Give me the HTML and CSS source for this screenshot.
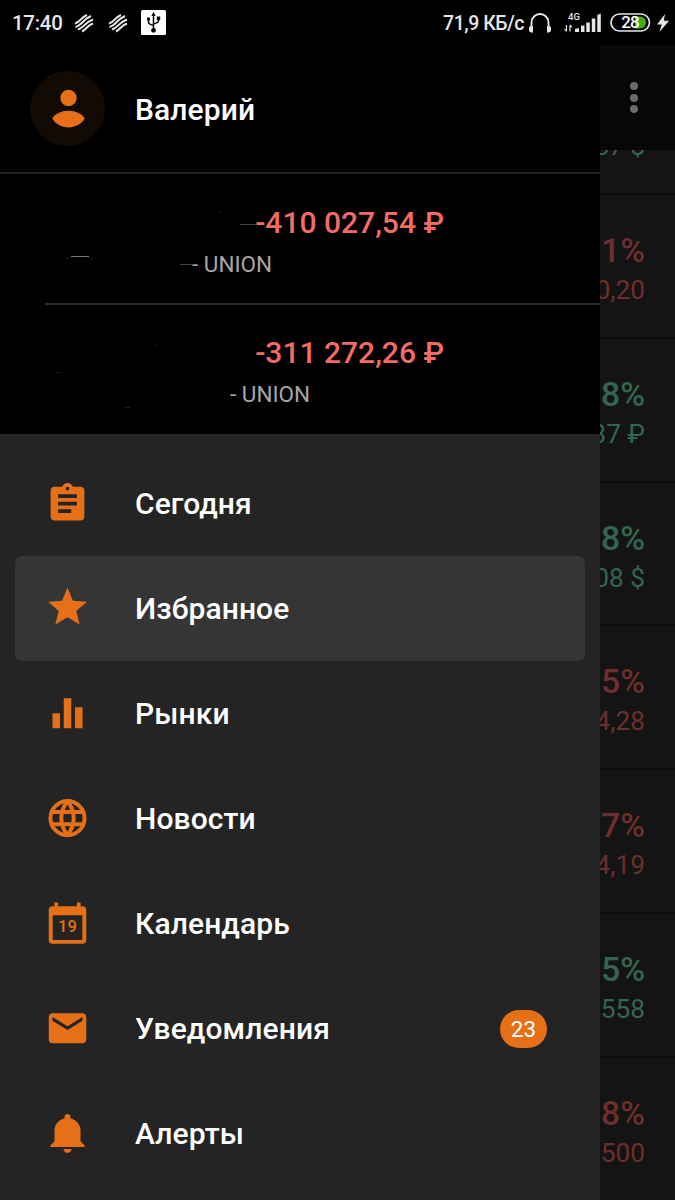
FILE: index.html
```html
<!DOCTYPE html>
<html lang="ru">
<head>
<meta charset="UTF-8" />
<title>Избранное</title>
<link rel="stylesheet" href="styles.css">
</head>
<body>

<div class="statusbar">
    <span class="time">17:40</span>
    <svg class="stripes" viewBox="0 0 20 20"><path d="M1 10.500C7 9 6 4.500 13 2M1.500 14C8 12.500 8 7 17 3M4 16.500C11 14 10 10 19 6.500M8 18.500C13 16 13 12.500 19 10.500"/></svg>
    <svg class="stripes" viewBox="0 0 20 20"><path d="M1 10.500C7 9 6 4.500 13 2M1.500 14C8 12.500 8 7 17 3M4 16.500C11 14 10 10 19 6.500M8 18.500C13 16 13 12.500 19 10.500"/></svg>
    <svg class="usb" viewBox="0 0 25 25">
        <rect width="25" height="25" rx="1.500" fill="#fff"/>
        <path d="M12.500 5v15M7.500 9v3.500q0 1.500 5 3M17.500 8v3q0 1.500-5 3" fill="none" stroke="#000" stroke-width="1.500"/>
        <path d="M12.500 2l2.200 4h-4.400z"/><circle cx="12.500" cy="20.300" r="2.400"/><circle cx="7.500" cy="9" r="1.700"/><path d="M15.800 6.500h3.400v3.400h-3.400z"/>
    </svg>
    <span class="speed">71,9 КБ/с</span>
    <svg class="headphones" viewBox="0 0 22 20"><path d="M2.500 17V9.500a8.500 8.500 0 0 1 17 0V17" fill="none" stroke="#e6e6e6" stroke-width="1.800"/><path d="M0 15q0-2 2-2h2v6.500H2q-2-.5-2-2.500zM22 15q0-2-2-2h-2v6.500h2q2-.5 2-2.500z"/></svg>
    <svg class="signal" viewBox="0 0 37 21">
        <text x="4" y="8">4G</text>
        <path d="M2.500 13v6M.5 17l2 2.500M6 19.500v-6M8 15.500l-2-2.500" fill="none" stroke="#e6e6e6" stroke-width="1.200"/>
        <path d="M11 20v-3l4-1v4zM17 20v-6.500h3.500V20zM22.300 20V10.500h3.500V20zM27.800 20V6.500h3.500V20zM33.300 20V3l3.500-1.500V20z"/>
    </svg>
    <svg class="battery" viewBox="0 0 41 19">
        <path d="M25 3.500h5a6 6 0 0 1 0 12h-5z" fill="#45ab12"/>
        <rect x="1" y="1" width="38.500" height="17" rx="8.500" fill="none" stroke="#e6e6e6" stroke-width="1.700"/>
        <text x="20" y="15.300" text-anchor="middle">28</text>
    </svg>
    <svg class="bolt" viewBox="0 0 12 20"><path d="M8 1L0 11.500h4.700L2.500 19 12 7.800H6.800z"/></svg>
</div>

<div class="screen">
    <div class="drawer">
        <div class="profile">
            <svg class="avatar" viewBox="0 0 75 75">
                <circle cx="37.500" cy="37.500" r="37.500" fill="#120a04"/>
                <circle cx="38.500" cy="27" r="8.200"/>
                <path d="M22.300 47.500C25 43 31 39.800 38.500 39.800S52 43 54.700 47.500C51.500 53 45.500 56.500 38.500 56.500S25.500 53 22.300 47.500z"/>
            </svg>
            <span>Валерий</span>
        </div>
        <div class="account">
            <div class="balance">-410 027,54 ₽</div>
            <div class="union first">- UNION</div>
            <svg class="marks" viewBox="0 0 300 130"><path d="M240 50.500h17M180 90.500h13"/><path class="faint" d="M71 82.500h18"/><path class="faint dim" d="M66 86l4-3M90 83l3 3M218 39h2M221 38v-1M181 63h1.500"/></svg>
        </div>
        <div class="account">
            <div class="balance">-311 272,26 ₽</div>
            <div class="union">- UNION</div>
            <svg class="marks" viewBox="0 0 300 130"><path class="faint dim" d="M55 68.500h5M125 103.500h5M155 41h2"/></svg>
        </div>
        <div class="menu">
            <div class="item">
                <svg viewBox="0 0 24 24"><path d="M19 3h-4.180C14.400 1.840 13.300 1 12 1c-1.300 0-2.400.84-2.820 2H5c-1.100 0-2 .9-2 2v14c0 1.100.9 2 2 2h14c1.100 0 2-.9 2-2V5c0-1.100-.9-2-2-2zm-7 0c.55 0 1 .45 1 1s-.45 1-1 1-1-.45-1-1 .45-1 1-1zm2 14H7v-2h7v2zm3-4H7v-2h10v2zm0-4H7V7h10v2z"/></svg>
                <span>Сегодня</span>
            </div>
            <div class="item active">
                <svg viewBox="0 0 24 24"><path d="M12 .8l2.900 7 7.500.6-5.700 4.900 1.800 7.200L12 16.600l-6.500 3.900 1.800-7.200-5.700-4.900 7.500-.6z"/></svg>
                <span>Избранное</span>
            </div>
            <div class="item">
                <svg viewBox="0 0 24 24"><path d="M4 11.800h4v8H4zM10 3.800h4v16h-4zM16 8.700h4v11.100h-4z"/></svg>
                <span>Рынки</span>
            </div>
            <div class="item">
                <svg class="outline" viewBox="0 0 24 24"><circle cx="12" cy="11.800" r="9.100"/><path d="M3.500 8.500h17M3.500 15.100h17M12 2.800C7.600 8.300 7.600 15.300 12 20.800M12 2.800c4.400 5.500 4.400 12.500 0 18"/></svg>
                <span>Новости</span>
            </div>
            <div class="item">
                <svg viewBox="0 0 24 24"><path fill-rule="evenodd" d="M5 .8h2v2h10v-2h2v2h1q2 0 2 2v16q0 2-2 2H4q-2 0-2-2v-16q0-2 2-2h1zM4.100 7.600v13.200h15.800V7.600z"/><text x="12" y="16.800" text-anchor="middle">19</text></svg>
                <span>Календарь</span>
            </div>
            <div class="item">
                <svg viewBox="0 0 24 24"><path d="M20 3.800H4c-1.100 0-1.990.9-1.990 2L2 17.800c0 1.100.9 2 2 2h16c1.100 0 2-.9 2-2V5.800c0-1.100-.9-2-2-2zm0 4l-8 5-8-5V5.800l8 5 8-5v2z"/></svg>
                <span>Уведомления</span>
                <span class="badge">23</span>
            </div>
            <div class="item">
                <svg viewBox="0 0 24 24"><path transform="translate(-.3 -.5) scale(1.070 1.040)" d="M11.500 22c1.100 0 2-.9 2-2h-4c0 1.100.9 2 2 2zm6.500-6v-5.500c0-3.070-2.130-5.640-5-6.320V3.500c0-.83-.67-1.500-1.500-1.500S10 2.670 10 3.500v.68c-2.870.68-5 3.250-5 6.320V16l-2 2v1h17v-1l-2-2z"/></svg>
                <span>Алерты</span>
            </div>
        </div>
    </div>

    <div class="quotes">
        <div class="toolbar"><i></i><i></i><i></i></div>
        <div class="list">
            <div class="quote up cut"><span>57 $</span></div>
            <div class="quote down"><b>1%</b><span>0,20</span></div>
            <div class="quote up"><b>8%</b><span>37 ₽</span></div>
            <div class="quote up"><b>8%</b><span>08 $</span></div>
            <div class="quote down"><b>5%</b><span>4,28</span></div>
            <div class="quote down"><b>7%</b><span>4,19</span></div>
            <div class="quote up"><b>75%</b><span>558</span></div>
            <div class="quote down"><b>8%</b><span>500</span></div>
        </div>
    </div>
</div>

</body>
</html>
```

FILE: styles.css
```css
* {
    box-sizing: border-box;
}
body {
    margin: 0;
    height: 1200px;
    overflow: hidden;
    background: #000;
    color: #fff;
    font-family: Roboto, sans-serif;
}
svg {
    display: block;
    flex: none;
}

/* status bar */
.statusbar {
    display: flex;
    align-items: center;
    height: 45px;
    padding-left: 12px;
    font-weight: 500;
    color: #e6e6e6;
    fill: #e6e6e6;
}
.time {
    width: 62px;
    margin-top: 1px;
    font-size: 20.5px;
    letter-spacing: -0.3px;
}
.stripes {
    width: 20px;
    height: 20px;
    margin-right: 14px;
    fill: none;
    stroke: #e6e6e6;
    stroke-width: 2;
}
.usb {
    width: 25px;
    height: 25px;
    margin-left: -1px;
    fill: #000;
}
.speed {
    margin: 1px 0 0 auto;
    width: 86px;
    font-size: 19.5px;
    letter-spacing: -0.45px;
    white-space: nowrap;
}
.headphones {
    width: 22px;
    height: 20px;
}
.signal {
    width: 37px;
    height: 21px;
    margin-left: 13px;
}
.signal text {
    font-size: 9.5px;
}
.battery {
    width: 41px;
    height: 19px;
    margin-left: 9px;
}
.battery text {
    font-size: 17px;
    letter-spacing: -1px;
    fill: #fff;
}
.bolt {
    width: 12px;
    height: 20px;
    margin: 0 6px 0 6px;
}

.screen {
    display: flex;
    height: 1155px;
}

/* drawer */
.drawer {
    width: 600px;
    background: #242424;
    fill: #e57017;
}
.profile {
    display: flex;
    align-items: center;
    gap: 30px;
    height: 129px;
    padding-left: 30px;
    border-bottom: 2px solid #222;
    background: #000;
    font-size: 30px;
    font-weight: 500;
}
.profile span {
    margin-top: 2px;
    letter-spacing: 0.1px;
}
.avatar {
    width: 75px;
    height: 75px;
}
.account {
    position: relative;
    height: 130px;
    padding-top: 31px;
    background: #000;
}
.account + .account::before {
    content: "";
    display: block;
    height: 2px;
    margin: -32px 0 30px 45px;
    background: #2e2e2e;
}
.balance {
    width: 444px;
    line-height: 36px;
    text-align: right;
    font-size: 30px;
    font-weight: 500;
    color: #f26c65;
}
.union {
    margin-top: 8px;
    padding-left: 230px;
    line-height: 30px;
    font-size: 22.5px;
    color: #a6a6a6;
}
.union.first {
    padding-left: 192px;
}
.marks {
    position: absolute;
    left: 0;
    top: 0;
    width: 300px;
    height: 130px;
    fill: none;
    stroke: #444;
}
.faint {
    stroke: #777;
}
.dim {
    stroke: #1c1c1c;
}
.menu {
    padding: 17px 15px 0;
}
.item {
    display: flex;
    align-items: center;
    height: 105px;
    padding: 0 38px 0 30px;
    border-radius: 7px;
    font-size: 30px;
    font-weight: 500;
    letter-spacing: 0.1px;
}
.item svg {
    width: 45px;
    height: 45px;
    margin-right: 45px;
}
.item text {
    font-size: 8.8px;
}
.item .outline {
    fill: none;
    stroke: #e57017;
    stroke-width: 2.1;
}
.active {
    background: #353535;
}
.badge {
    margin-left: auto;
    width: 47px;
    height: 38px;
    border-radius: 19px;
    background: #e57017;
    line-height: 39px;
    text-align: center;
    font-size: 22.5px;
    font-weight: 400;
}

/* dimmed quotes list behind the drawer */
.quotes {
    width: 75px;
    overflow: hidden;
}
.toolbar {
    display: flex;
    flex-direction: column;
    align-items: center;
    justify-content: center;
    gap: 3.5px;
    height: 105px;
    padding-right: 8px;
    background: #070707;
}
.toolbar i {
    width: 8px;
    height: 8px;
    border-radius: 50%;
    background: #6b6b6b;
}
.list {
    background: #141414;
}
.quote {
    display: flex;
    flex-direction: column;
    align-items: flex-end;
    height: 143.8px;
    padding: 36px 30px 0 0;
    border-bottom: 2px solid #0e0e0e;
    white-space: nowrap;
    font-size: 26.25px;
    line-height: 30px;
}
.quote b {
    margin-bottom: 4px;
    font-size: 33.75px;
    font-weight: 500;
    line-height: 40px;
}
.cut {
    justify-content: flex-end;
    height: 45px;
    padding: 0 30px 32px 0;
    overflow: hidden;
}
.up {
    color: #356450;
}
.down {
    color: #6d2f2e;
}
```
